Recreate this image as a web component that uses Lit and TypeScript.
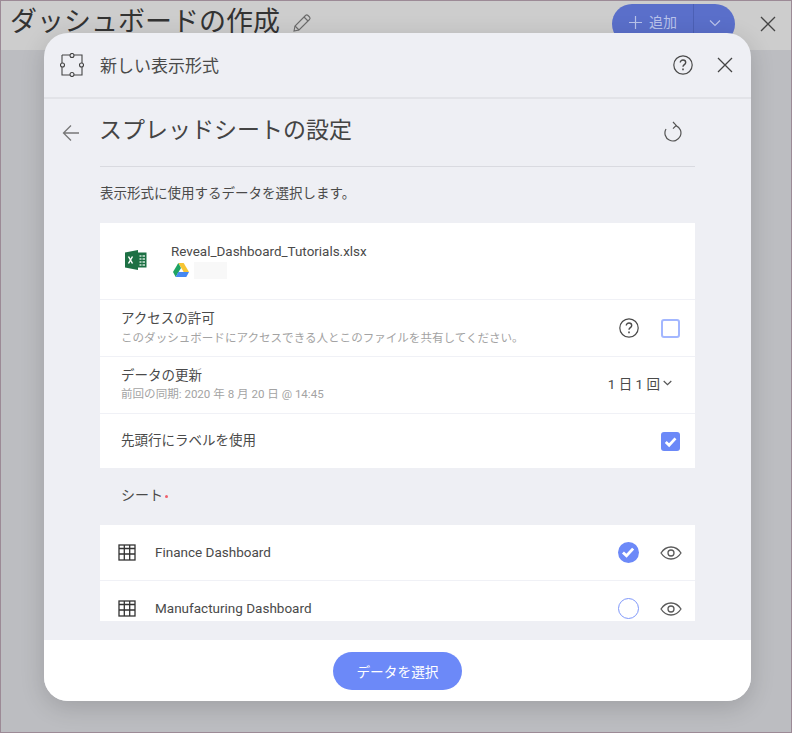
import { LitElement, html, css, svg } from 'lit';
import { customElement } from 'lit/decorators.js';

const helpIcon = html`<svg class="icon" width="22" height="22" viewBox="0 0 22 22" fill="none" stroke="#4a4a4a">
  <circle cx="11" cy="11" r="9.2" stroke-width="1.2"></circle>
  <path d="M8.3 8.6c0-1.6 1.2-2.6 2.7-2.6s2.7 1 2.7 2.4c0 2.2-2.7 2.2-2.7 4.4" stroke-width="1.4"></path>
  <path d="M11 14.6v1.6" stroke-width="1.6"></path>
</svg>`;

const closeIcon = html`<svg width="16" height="16" viewBox="0 0 16 16" stroke="#444" stroke-width="1.3" fill="none">
  <path d="M1 1l14 14M15 1L1 15"></path>
</svg>`;

const eyeIcon = html`<svg width="22" height="16" viewBox="0 0 22 16" fill="none" stroke="#5a5a5a" stroke-width="1.3">
  <path d="M1 8c2.6-4 6-6 10-6s7.400 2 10 6c-2.600 4-6 6-10 6S3.600 12 1 8z"></path>
  <circle cx="11" cy="8" r="3"></circle>
</svg>`;

const sheetIcon = html`<svg width="18" height="17" viewBox="0 0 18 17" fill="none" stroke="#333" stroke-width="1.300">
  <rect x="1" y="1" width="16" height="15"></rect>
  <path d="M1 4.500h16M6.300 1v15M11.700 1v15M1 10h16"></path>
</svg>`;

const tick = svg`<path d="M4.500 9.500l3.200 3 6-6.500" fill="none" stroke="#fff" stroke-width="2.600"></path>`;

@customElement('app-root')
export class AppRoot extends LitElement {
  static styles = css`
    :host {
      display: block;
      font-family: Roboto, "Noto Sans CJK JP", sans-serif;
      color: #4a4a4a;
    }

    .page {
      position: relative;
      width: 792px;
      height: 733px;
      box-sizing: border-box;
      border: 1px solid #9c8a96;
      background: #bcbdc1;
      overflow: hidden;
    }

    .topbar {
      height: 49px;
      background: #cdcdcd;
      display: flex;
      align-items: flex-start;
      padding: 4px 15px 0 9px;
      box-sizing: border-box;
    }

    .page-title {
      font-size: 27px;
      line-height: 34px;
      color: #333;
    }

    .pencil {
      margin: 8px 0 0 12px;
    }

    .add-group {
      margin: -1px 0 0 auto;
      display: flex;
      height: 40px;
      width: 123px;
      border-radius: 20px;
      background: #5a6fca;
      color: #b9c3ea;
      font-size: 14px;
    }

    .add-main {
      flex: 1;
      display: flex;
      align-items: flex-start;
      padding: 8px 0 0 17px;
      gap: 7px;
      line-height: 20px;
    }

    .add-arrow {
      width: 42px;
      border-left: 1px solid #4c60b5;
      display: flex;
      justify-content: center;
      padding-top: 15px;
      box-sizing: border-box;
    }

    .top-close {
      margin: 11px 0 0 25px;
    }

    .modal {
      position: absolute;
      left: 43px;
      top: 32px;
      width: 707px;
      height: 668px;
      border-radius: 24px;
      background: #eeeff4;
      box-shadow: 0 6px 24px rgba(0, 0, 0, 0.16);
      display: flex;
      flex-direction: column;
      overflow: hidden;
    }

    .modal-head {
      height: 66px;
      flex: none;
      box-sizing: border-box;
      border-bottom: 2px solid #e2e3e8;
      display: flex;
      align-items: center;
      padding: 0 18px 0 16px;
    }

    .modal-head .name {
      margin: -2px 1px 0 16px;
      font-size: 17px;
      flex: 1;
    }

    .modal-head .x {
      margin-left: 23px;
      display: flex;
    }

    .modal-head .icon {
      display: block;
    }

    .body {
      flex: 1;
      min-height: 0;
      padding: 0 56px;
      overflow: hidden;
    }

    .sub-head {
      height: 68px;
      box-sizing: border-box;
      border-bottom: 1px solid #d9dae0;
      display: flex;
      align-items: center;
      position: relative;
      padding-bottom: 7px;
    }

    .back {
      position: absolute;
      left: -38px;
      top: 25px;
    }

    .sub-head h2 {
      margin: -2px 0 0 -1px;
      font-size: 23px;
      font-weight: 400;
      flex: 1;
      color: #444;
    }

    .refresh {
      margin: 3px 12px 0 0;
    }

    .lead {
      margin: 17px 0 0;
      font-size: 13.5px;
      line-height: 19px;
      height: 39px;
    }

    .card {
      background: #fff;
    }

    .row {
      display: flex;
      align-items: center;
      box-sizing: border-box;
      border-bottom: 1px solid #f0f1f6;
      padding: 0 15px 0 21px;
    }

    .file-row {
      height: 77px;
      padding-left: 25px;
      align-items: flex-start;
      padding-top: 20px;
    }

    .file-info {
      margin-left: 24px;
      font-size: 13.45px;
      line-height: 18px;
    }

    .xl {
      margin-top: 7px;
    }

    .source {
      display: flex;
      align-items: center;
      gap: 5px;
      height: 18px;
    }

    .drive {
      margin-left: 2px;
    }

    .blur {
      width: 33px;
      height: 17px;
      background: #f8f8f8;
    }

    .access-row,
    .refresh-row {
      height: 57px;
    }

    .label-row {
      height: 54px;
      border-bottom: none;
    }

    .row-text {
      flex: 1;
      min-width: 0;
      margin-top: -2px;
      font-size: 13.5px;
      line-height: 18px;
    }

    .hint {
      font-size: 11.55px;
      line-height: 16px;
      margin-top: 2px;
      color: #a3a3a3;
    }

    .access-row .row-text {
      margin-top: -1px;
    }

    .access-row .hint {
      margin-top: 3px;
    }

    .check {
      width: 19px;
      height: 19px;
      box-sizing: border-box;
      border-radius: 3px;
      border: 2px solid #a3b7ff;
      margin-left: 21px;
      display: block;
    }

    .check.on {
      background: #6c89f8;
      border: none;
    }

    .freq {
      font-size: 13.5px;
      display: flex;
      align-items: center;
      gap: 3px;
      margin: -4px 8px 0 0;
    }

    .section-label {
      height: 57px;
      box-sizing: border-box;
      padding: 17px 0 0 21px;
      font-size: 14px;
      line-height: 20px;
    }

    .req {
      display: inline-block;
      width: 3px;
      height: 3px;
      border-radius: 50%;
      background: #f0606c;
      margin: 0 0 2px 2px;
    }

    .sheets {
      height: 96px;
      overflow: hidden;
    }

    .sheet-row {
      height: 56px;
      font-size: 13.5px;
      padding: 0 13px 0 18px;
      flex: none;
    }

    .sheet-row .nm {
      flex: 1;
      margin: -2px 0 0 19px;
    }

    .pick {
      width: 21px;
      height: 21px;
      box-sizing: border-box;
      border-radius: 50%;
      border: 1.5px solid #7f98fa;
      margin-right: 21px;
      display: block;
    }

    .pick.on {
      background: #6c89f8;
      border: none;
    }

    .foot {
      height: 61px;
      flex: none;
      background: #fff;
      display: flex;
      justify-content: center;
      padding-top: 12px;
      box-sizing: border-box;
    }

    .primary {
      width: 129px;
      height: 38px;
      border: none;
      border-radius: 19px;
      background: #6c89f8;
      color: #fff;
      font: inherit;
      font-size: 13.7px;
    }
  `;

  render() {
    return html`
      <div class="page">
        <div class="topbar">
          <span class="page-title">ダッシュボードの作成</span>
          <svg class="pencil" width="20" height="20" viewBox="0 0 20 20" fill="none" stroke="#6b6b6b" stroke-width="1.100">
            <path d="M2 18l1-5L13.500 2.500a1.800 1.800 0 012.500 0l1.500 1.500a1.800 1.800 0 010 2.500L7 17z"></path>
            <path d="M3 13l4 4M12 4l4 4"></path>
          </svg>
          <div class="add-group">
            <div class="add-main">
              <svg width="13" height="20" viewBox="0 0 13 20" stroke="#b9c3ea" stroke-width="1.200"><path d="M6.500 4v13M0 10.500h13"></path></svg>
              <span>追加</span>
            </div>
            <div class="add-arrow">
              <svg width="12" height="8" viewBox="0 0 12 8" fill="none" stroke="#b9c3ea" stroke-width="1.200"><path d="M1 1.500l5 5 5-5"></path></svg>
            </div>
          </div>
          <span class="top-close">${closeIcon}</span>
        </div>

        <div class="modal">
          <div class="modal-head">
            <svg width="24" height="24" viewBox="0 0 24 24" fill="none" stroke="#444" stroke-width="1.100">
              <path d="M4 2h16M22 4v16M20 22H4M2 20V4"></path>
              <path d="M2 2h2M20 2h2v2M22 20v2h-2M4 22H2v-2M2 2v2"></path>
              <g fill="#eeeff4">
                <circle cx="12" cy="2.500" r="2"></circle>
                <circle cx="12" cy="21.500" r="2"></circle>
                <circle cx="2.500" cy="12" r="2"></circle>
                <circle cx="21.500" cy="12" r="2"></circle>
              </g>
            </svg>
            <span class="name">新しい表示形式</span>
            ${helpIcon}
            <span class="x">${closeIcon}</span>
          </div>

          <div class="body">
            <div class="sub-head">
              <svg class="back" width="18" height="18" viewBox="0 0 18 18" fill="none" stroke="#777" stroke-width="1.300"><path d="M17 9H1.500M9 1.500L1.500 9 9 16.500"></path></svg>
              <h2>スプレッドシートの設定</h2>
              <svg class="refresh" width="20" height="22" viewBox="0 0 20 22" fill="none" stroke="#555" stroke-width="1.200">
                <path d="M13 5.600A8 8 0 1 1 3 9"></path>
                <path d="M10 2l3.200 3.400L10 8.600"></path>
              </svg>
            </div>

            <p class="lead">表示形式に使用するデータを選択します。</p>

            <div class="card">
              <div class="row file-row">
                <svg class="xl" width="22" height="20" viewBox="0 0 22 20">
                  <path d="M0 2.500L13 0v20L0 17.500z" fill="#1d7044"></path>
                  <rect x="13" y="2.500" width="8.500" height="15" fill="#1d7044"></rect>
                  <path d="M14.500 6h5.500M14.500 9h5.500M14.500 12h5.500M14.500 15h5.500" stroke="#cfe5d8" stroke-width="1.500"></path>
                  <path d="M17 4v12.500" stroke="#1d7044" stroke-width="1"></path>
                  <path d="M3.500 6.500l4 7M7.500 6.500l-4 7" stroke="#fff" stroke-width="1.500"></path>
                </svg>
                <div class="file-info">
                  <div>Reveal_Dashboard_Tutorials.xlsx</div>
                  <div class="source">
                    <svg class="drive" width="16" height="14" viewBox="0 0 16 14">
                      <path d="M5.300 0h5.400l5.300 9h-5.300z" fill="#f7c533"></path>
                      <path d="M5.300 0L0 9l2.700 5 5.300-9z" fill="#1ea362"></path>
                      <path d="M2.700 14h10.600L16 9H5.300z" fill="#4688f1"></path>
                    </svg>
                    <span class="blur"></span>
                  </div>
                </div>
              </div>

              <div class="row access-row">
                <div class="row-text">
                  <div>アクセスの許可</div>
                  <div class="hint">このダッシュボードにアクセスできる人とこのファイルを共有してください。</div>
                </div>
                ${helpIcon}
                <span class="check"></span>
              </div>

              <div class="row refresh-row">
                <div class="row-text">
                  <div>データの更新</div>
                  <div class="hint">前回の同期: 2020 年 8 月 20 日 @ 14:45</div>
                </div>
                <div class="freq">
                  <span>1 日 1 回</span>
                  <svg width="9" height="6" viewBox="0 0 9 6" fill="none" stroke="#555" stroke-width="1.200"><path d="M.7 1l3.800 3.600L8.300 1"></path></svg>
                </div>
              </div>

              <div class="row label-row">
                <div class="row-text">先頭行にラベルを使用</div>
                <svg class="check on" viewBox="0 0 18 18">${tick}</svg>
              </div>
            </div>

            <div class="section-label">シート<span class="req"></span></div>

            <div class="card sheets">
              <div class="row sheet-row">
                ${sheetIcon}
                <span class="nm">Finance Dashboard</span>
                <svg class="pick on" viewBox="0 0 19 19">${tick}</svg>
                ${eyeIcon}
              </div>
              <div class="row sheet-row">
                ${sheetIcon}
                <span class="nm">Manufacturing Dashboard</span>
                <span class="pick"></span>
                ${eyeIcon}
              </div>
            </div>
          </div>

          <div class="foot">
            <button class="primary">データを選択</button>
          </div>
        </div>
      </div>
    `;
  }
}
